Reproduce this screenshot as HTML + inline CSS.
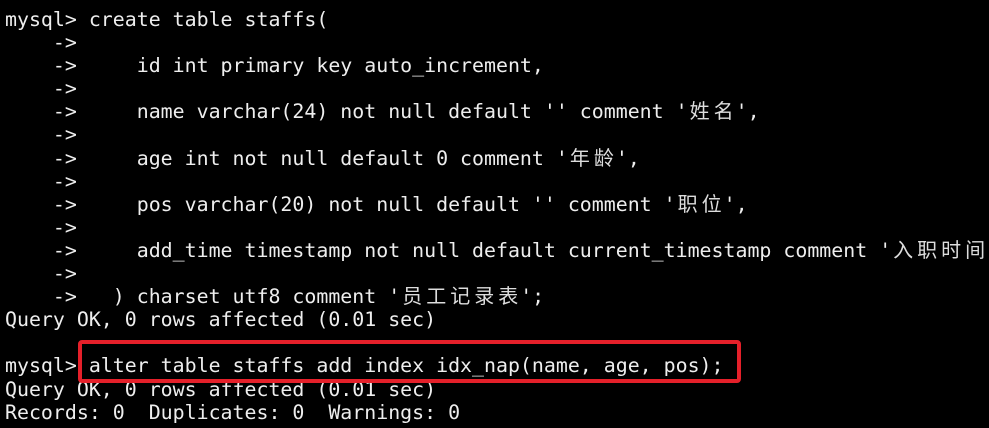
<!DOCTYPE html>
<html><head><meta charset="utf-8"><style>
html,body{margin:0;padding:0;background:#000;width:989px;height:428px;overflow:hidden}
pre{margin:0;position:absolute;left:5px;top:8px;font-family:"DejaVu Sans Mono","Liberation Mono","Noto Sans CJK SC",monospace;font-size:19.9px;line-height:23.1px;color:#eeeeee;white-space:pre}
.c{display:inline-block;width:24px;text-align:center;font-family:"Noto Sans CJK SC","WenQuanYi Zen Hei",sans-serif;font-size:20px;line-height:20px;color:#ddd}
.box{position:absolute;left:78px;top:340px;width:655px;height:35px;border:4px solid #e5202a;border-radius:4px}
.cur{position:absolute;left:535px;top:197px;width:5px;height:22px;border-left:1px solid #aaa}
</style></head><body>
<pre>mysql&gt; create table staffs(
    -&gt;
    -&gt;     id int primary key auto_increment,
    -&gt;
    -&gt;     name varchar(24) not null default '' comment '<span class="c">姓</span><span class="c">名</span>',
    -&gt;
    -&gt;     age int not null default 0 comment '<span class="c">年</span><span class="c">龄</span>',
    -&gt;
    -&gt;     pos varchar(20) not null default '' comment '<span class="c">职</span><span class="c">位</span>',
    -&gt;
    -&gt;     add_time timestamp not null default current_timestamp comment '<span class="c">入</span><span class="c">职</span><span class="c">时</span><span class="c">间</span>
    -&gt;
    -&gt;   ) charset utf8 comment '<span class="c">员</span><span class="c">工</span><span class="c">记</span><span class="c">录</span><span class="c">表</span>';
Query OK, 0 rows affected (0.01 sec)

mysql&gt; alter table staffs add index idx_nap(name, age, pos);
Query OK, 0 rows affected (0.01 sec)
Records: 0  Duplicates: 0  Warnings: 0</pre>
<div class="box"></div>
</body></html>
